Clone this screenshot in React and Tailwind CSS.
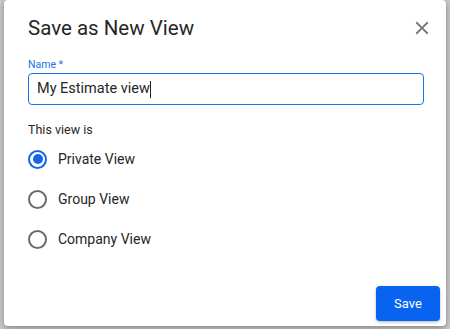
import { useState } from 'react';

const options = ['Private View', 'Group View', 'Company View'];

function Radio({ checked }) {
  return (
    <span
      className={`w-[19px] h-[19px] rounded-full border-2 flex items-center justify-center ${
        checked ? 'border-[#1565e8]' : 'border-[#6b6b6b]'
      }`}
    >
      {checked && <span className="w-[10px] h-[10px] rounded-full bg-[#1565e8]" />}
    </span>
  );
}

export default function App() {
  const [view, setView] = useState('Private View');

  return (
    <div className="w-[450px] h-[329px] bg-[#c9c9c9] pl-[4px] pr-[4px] pb-[3px] font-['Roboto',sans-serif]">
      <div className="h-full bg-white rounded-[4px] shadow-[0_2px_6px_rgba(0,0,0,0.35)] flex flex-col">
        {/* Header */}
        <div className="flex items-center justify-between pl-[24px] pr-[13px] pt-[14px]">
          <h2 className="text-[20.5px] leading-[28px] text-[#262626]">Save as New View</h2>
          <button className="w-[22px] h-[22px] text-[#757575]">
            <svg viewBox="0 0 24 24" className="w-[22px] h-[22px]" fill="currentColor">
              <path d="M19 6.41 17.59 5 12 10.59 6.41 5 5 6.41 10.59 12 5 17.59 6.41 19 12 13.41 17.59 19 19 17.59 13.41 12z" />
            </svg>
          </button>
        </div>

        {/* Name field */}
        <div className="pl-[24px] pr-[22px] mt-[16px]">
          <label className="block text-[10.5px] leading-[14px] text-[#1a73e8]">Name *</label>
          <div className="mt-[1px] h-[32px] border-[1.5px] border-[#1a73e8] rounded-[4px] flex items-center pl-[8px]">
            <span className="text-[14.5px] text-[#262626]">My Estimate view</span>
            <span className="w-[1px] h-[17px] bg-[#222]" />
          </div>
        </div>

        {/* Visibility */}
        <div className="pl-[24px] mt-[17px]">
          <p className="text-[12.5px] leading-[16px] text-[#262626]">This view is</p>
          <div className="mt-[1px] flex flex-col">
            {options.map((o) => (
              <button
                key={o}
                onClick={() => setView(o)}
                className="h-[40px] flex items-center gap-[11px] pl-0"
              >
                <Radio checked={view === o} />
                <span className="text-[14px] text-[#262626]">{o}</span>
              </button>
            ))}
          </div>
        </div>

        {/* Footer */}
        <div className="mt-auto flex justify-end pr-[6px] pb-[5px]">
          <button className="w-[64px] h-[35px] rounded-[4px] bg-[#0763f0] text-white text-[13px] shadow-[0_1px_3px_rgba(0,0,0,0.3)]">
            Save
          </button>
        </div>
      </div>
    </div>
  );
}
